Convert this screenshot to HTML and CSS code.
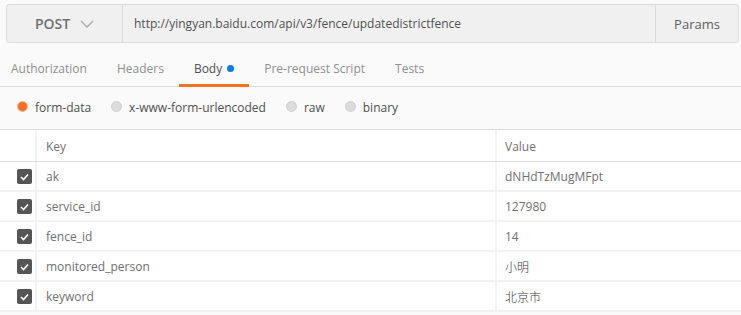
FILE: index.html
```html
<!DOCTYPE html>
<html lang="en">
<head>
    <meta charset="UTF-8">
    <title>Request Builder</title>
    <link rel="stylesheet" href="styles.css">
</head>
<body>

    <!-- URL bar -->
    <div class="request-bar">
        <div class="method">
            <span>POST</span>
            <svg class="chevron" width="14" height="8" viewBox="0 0 14 8"><path d="M1 1 L7 7 L13 1" fill="none" stroke="#aaa" stroke-width="1.3"/></svg>
        </div>
        <div class="url">http://yingyan.baidu.com/api/v3/fence/updatedistrictfence</div>
        <div class="params">Params</div>
    </div>

    <!-- Tabs -->
    <div class="tabs">
        <div class="tab first">Authorization</div>
        <div class="tab">Headers</div>
        <div class="tab active">Body <span class="dot"></span></div>
        <div class="tab">Pre-request Script</div>
        <div class="tab">Tests</div>
    </div>

    <!-- Body type -->
    <div class="body-types">
        <label class="radio"><span class="circle on"></span>form-data</label>
        <label class="radio"><span class="circle"></span>x-www-form-urlencoded</label>
        <label class="radio"><span class="circle"></span>raw</label>
        <label class="radio"><span class="circle"></span>binary</label>
    </div>

    <!-- Key / value table -->
    <div class="kv-table">
        <div class="kv-row head">
            <div class="cell check"></div>
            <div class="cell key">Key</div>
            <div class="cell value">Value</div>
        </div>
        <div class="kv-row">
            <div class="cell check"><span class="box"><svg width="9" height="8" viewBox="0 0 9 8"><path d="M1 4 L3.5 6.5 L8 1.5" fill="none" stroke="#fff" stroke-width="1.6"/></svg></span></div>
            <div class="cell key">ak</div>
            <div class="cell value">dNHdTzMugMFpt</div>
        </div>
        <div class="kv-row">
            <div class="cell check"><span class="box"><svg width="9" height="8" viewBox="0 0 9 8"><path d="M1 4 L3.5 6.5 L8 1.5" fill="none" stroke="#fff" stroke-width="1.6"/></svg></span></div>
            <div class="cell key">service_id</div>
            <div class="cell value">127980</div>
        </div>
        <div class="kv-row">
            <div class="cell check"><span class="box"><svg width="9" height="8" viewBox="0 0 9 8"><path d="M1 4 L3.5 6.5 L8 1.5" fill="none" stroke="#fff" stroke-width="1.6"/></svg></span></div>
            <div class="cell key">fence_id</div>
            <div class="cell value">14</div>
        </div>
        <div class="kv-row">
            <div class="cell check"><span class="box"><svg width="9" height="8" viewBox="0 0 9 8"><path d="M1 4 L3.5 6.5 L8 1.5" fill="none" stroke="#fff" stroke-width="1.6"/></svg></span></div>
            <div class="cell key">monitored_person</div>
            <div class="cell value dark">小明</div>
        </div>
        <div class="kv-row">
            <div class="cell check"><span class="box"><svg width="9" height="8" viewBox="0 0 9 8"><path d="M1 4 L3.5 6.5 L8 1.5" fill="none" stroke="#fff" stroke-width="1.6"/></svg></span></div>
            <div class="cell key">keyword</div>
            <div class="cell value dark">北京市</div>
        </div>
    </div>

</body>
</html>
```

FILE: styles.css
```css
body {
    font-family: "Open Sans", "Noto Sans CJK SC", sans-serif;
    font-size: 12px;
    background-color: #fafafa;
    color: #505050;
    margin: 0;
}
.request-bar {
    display: flex;
    height: 37px;
    margin: 4px 2px 0 6px;
    background-color: #f0f0f0;
    border: 1px solid #dcdcdc;
    border-radius: 3px;
}
.method {
    width: 115px;
    display: flex;
    align-items: center;
    justify-content: center;
    gap: 10px;
    font-size: 14px;
    font-weight: 600;
    color: #707070;
}
.url {
    flex: 1;
    display: flex;
    align-items: center;
    padding-left: 11px;
    border-left: 1px solid #dcdcdc;
    color: #505050;
}
.params {
    width: 82px;
    display: flex;
    align-items: center;
    justify-content: center;
    border-left: 1px solid #dcdcdc;
    color: #606060;
    font-size: 13px;
}
.tabs {
    display: flex;
    height: 43px;
    border-bottom: 1px solid #dcdcdc;
}
.tab {
    padding: 10px 15px 0;
    display: flex;
    align-items: center;
    color: #909090;
    border-bottom: 3px solid transparent;
    margin-bottom: -1px;
}
.tab.first {
    padding-left: 11px;
}
.tab.active {
    color: #505050;
    border-bottom-color: #f47023;
}
.dot {
    display: inline-block;
    width: 7px;
    height: 7px;
    border-radius: 50%;
    background-color: #097bed;
    margin-left: 5px;
}
.body-types {
    display: flex;
    align-items: center;
    gap: 20px;
    height: 42px;
    padding-left: 17px;
    border-bottom: 1px solid #dcdcdc;
}
.radio {
    display: flex;
    align-items: center;
    gap: 7px;
    color: #505050;
    margin-top: -1px;
}
.circle {
    width: 9px;
    height: 9px;
    border-radius: 50%;
    background-color: #dcdcdc;
    border: 1px solid #d0d0d0;
    margin-top: -3px;
}
.circle.on {
    background-color: #f47023;
    border-color: #f9b99a;
}
.kv-table {
    background-color: #fff;
}
.kv-row {
    display: flex;
    height: 28px;
    border-bottom: 2px solid #f3f3f3;
}
.kv-row.head {
    height: 31px;
    border-bottom: 1px solid #dcdcdc;
}
.cell {
    display: flex;
    align-items: center;
    padding-top: 1px;
}
.check {
    width: 37px;
    justify-content: flex-end;
    border-right: 2px solid #f3f3f3;
    box-sizing: border-box;
}
.box {
    width: 15px;
    height: 15px;
    border-radius: 2px;
    background-color: #555;
    display: flex;
    align-items: center;
    justify-content: center;
    margin-right: 3px;
}
.key {
    width: 460px;
    padding-left: 9px;
    border-right: 2px solid #f3f3f3;
    color: #707070;
    box-sizing: border-box;
}
.value {
    flex: 1;
    padding-left: 8px;
    color: #707070;
}
.value.dark {
    color: #3a3a3a;
    font-weight: 300;
}
```
